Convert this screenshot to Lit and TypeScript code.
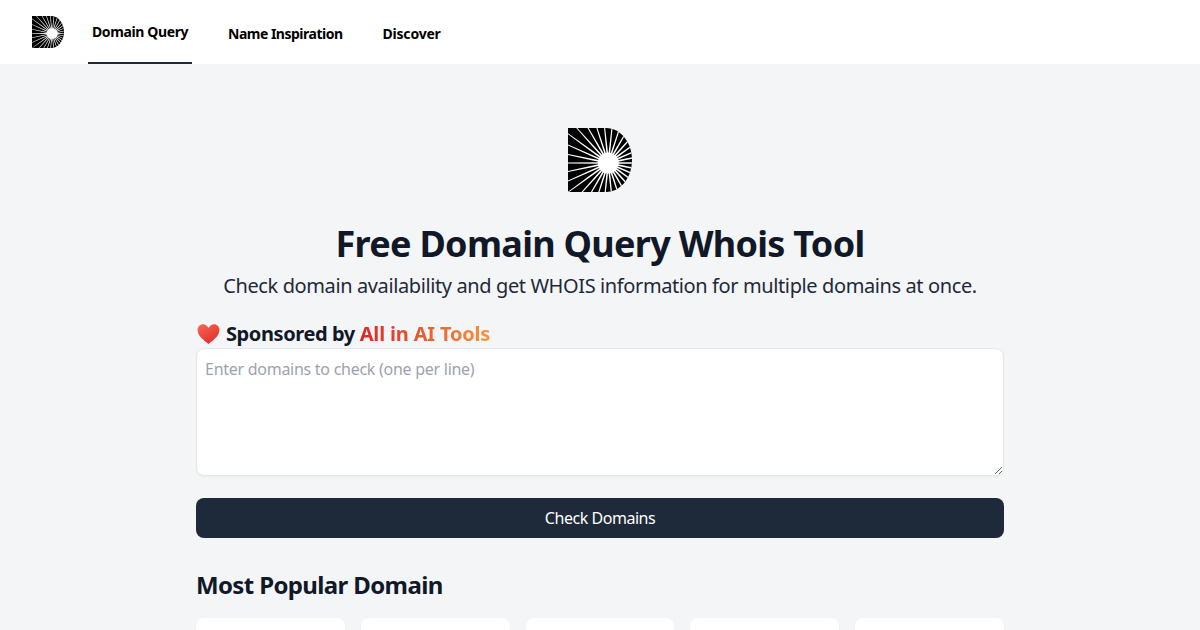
import { LitElement, html, css, svg } from "lit";
import { customElement } from "lit/decorators.js";

const CX = 40.3, CY = 35;
const N = 30;
const rays = Array.from({ length: N }, (_, i) => {
  const a = (i * Math.PI * 2) / N;
  const p = (r: number, d: number) => {
    const x = CX + Math.cos(a + d) * r, y = CY + Math.sin(a + d) * r;
    return `${x.toFixed(2)},${y.toFixed(2)}`;
  };
  return svg`<polygon points="${p(9, -0.09)} ${p(70, -0.003)} ${p(70, 0.003)} ${p(9, 0.09)}" fill="#fff" />`;
});

const logo = (size: number) => html`<svg class="logo" width="${size}" height="${size}" viewBox="0 0 64 64">
  <clipPath id="d${size}"><path d="M0 0H38C53 0 64 15 64 32C64 49 53 64 38 64H0Z" /></clipPath>
  <g clip-path="url(#d${size})">
    <rect width="64" height="64" fill="#000" />
    ${rays}
    <circle cx="${CX}" cy="${CY}" r="10.5" fill="#fff" />
  </g>
</svg>`;

@customElement("app-root")
export class AppRoot extends LitElement {
  static styles = css`
    :host {
      display: block;
      height: 630px;
      overflow: hidden;
      background: #f3f5f7;
      color: #111827;
      font-family: "Noto Sans", sans-serif;
    }
    * { box-sizing: border-box; }
    header {
      height: 64px;
      background: #fff;
      display: flex;
      align-items: center;
      padding: 0 32px;
    }
    nav { display: flex; align-items: stretch; height: 64px; margin-left: 24px; gap: 32px; }
    nav a {
      display: flex;
      align-items: center;
      padding: 2px 4px 0;
      font-size: 14px;
      font-weight: 700;
      color: #000;
      letter-spacing: -0.38px;
    }
    nav a.wide { letter-spacing: -0.5px; }
    nav a.short { letter-spacing: -0.2px; }
    nav a.active { width: 104px; white-space: nowrap; padding-top: 0; border-bottom: 2px solid #1e2939; }
    .logo { display: block; flex: none; }
    main {
      width: 808px;
      margin: 0 auto;
      padding-top: 64px;
      display: flex;
      flex-direction: column;
    }
    .hero-logo { align-self: center; }
    h1 {
      margin: 32px 0 0;
      font-size: 36px;
      line-height: 40px;
      font-weight: 700;
      text-align: center;
      letter-spacing: -0.71px;
    }
    .sub {
      margin: 8px 0 0;
      font-size: 20px;
      line-height: 28px;
      text-align: center;
      color: #1f2937;
      letter-spacing: -0.39px;
    }
    .sponsor {
      margin-top: 20px;
      height: 28px;
      display: flex;
      align-items: center;
      gap: 5px;
      font-size: 20px;
      font-weight: 700;
      letter-spacing: -0.4px;
    }
    .sponsor span.txt { position: relative; top: -1px; }
    .grad {
      background: linear-gradient(90deg, #dc2626, #fb923c);
      -webkit-background-clip: text;
      background-clip: text;
      color: transparent;
      letter-spacing: -0.17px;
    }
    textarea {
      display: block;
      width: 100%;
      height: 128px;
      margin: 0;
      padding: 8px;
      border: 1px solid #e5e7eb;
      border-radius: 8px;
      background: #fff;
      box-shadow: 0 1px 2px rgba(0, 0, 0, 0.05);
      font: 16px/24px "Noto Sans", sans-serif;
      letter-spacing: -0.27px;
      outline: none;
    }
    textarea::placeholder { color: #9ca3af; opacity: 1; }
    button {
      margin-top: 22px;
      height: 40px;
      border: 0;
      border-radius: 8px;
      background: #1e2939;
      color: #fff;
      font: 16px/24px "Noto Sans", sans-serif;
      letter-spacing: -0.46px;
    }
    h2 {
      margin: 31px 0 0;
      font-size: 24px;
      line-height: 32px;
      font-weight: 700;
      letter-spacing: -0.63px;
    }
    .cards {
      margin-top: 17px;
      display: grid;
      grid-template-columns: repeat(5, 1fr);
      gap: 16px;
    }
    .card {
      height: 100px;
      background: #fff;
      border-radius: 8px;
      box-shadow: 0 1px 2px rgba(0, 0, 0, 0.05);
    }
  `;

  render() {
    return html`
      <header>
        ${logo(32)}
        <nav>
          <a class="active">Domain Query</a>
          <a class="wide">Name Inspiration</a>
          <a class="short">Discover</a>
        </nav>
      </header>
      <main>
        <div class="hero-logo">${logo(64)}</div>
        <h1>Free Domain Query Whois Tool</h1>
        <p class="sub">Check domain availability and get WHOIS information for multiple domains at once.</p>
        <div class="sponsor">
          <svg width="25" height="22" viewBox="0 0 25 22">
            <defs><linearGradient id="h" x1="0" y1="0" x2="0.6" y2="1"><stop offset="0" stop-color="#f9675a" /><stop offset="1" stop-color="#e22f28" /></linearGradient></defs>
            <path d="M12.5 21C7 16.5 1.6 12.5 1.6 7C1.6 3.6 4 1.2 7 1.2C9.2 1.2 11.2 2.5 12.5 5C13.8 2.5 15.8 1.2 18 1.2C21 1.2 23.4 3.6 23.4 7C23.4 12.5 18 16.5 12.5 21Z" fill="url(#h)" />
          </svg>
          <span class="txt">Sponsored by <span class="grad">All in AI Tools</span></span>
        </div>
        <textarea placeholder="Enter domains to check (one per line)"></textarea>
        <button>Check Domains</button>
        <h2>Most Popular Domain</h2>
        <div class="cards">
          <div class="card"></div><div class="card"></div><div class="card"></div><div class="card"></div><div class="card"></div>
        </div>
      </main>
    `;
  }
}
